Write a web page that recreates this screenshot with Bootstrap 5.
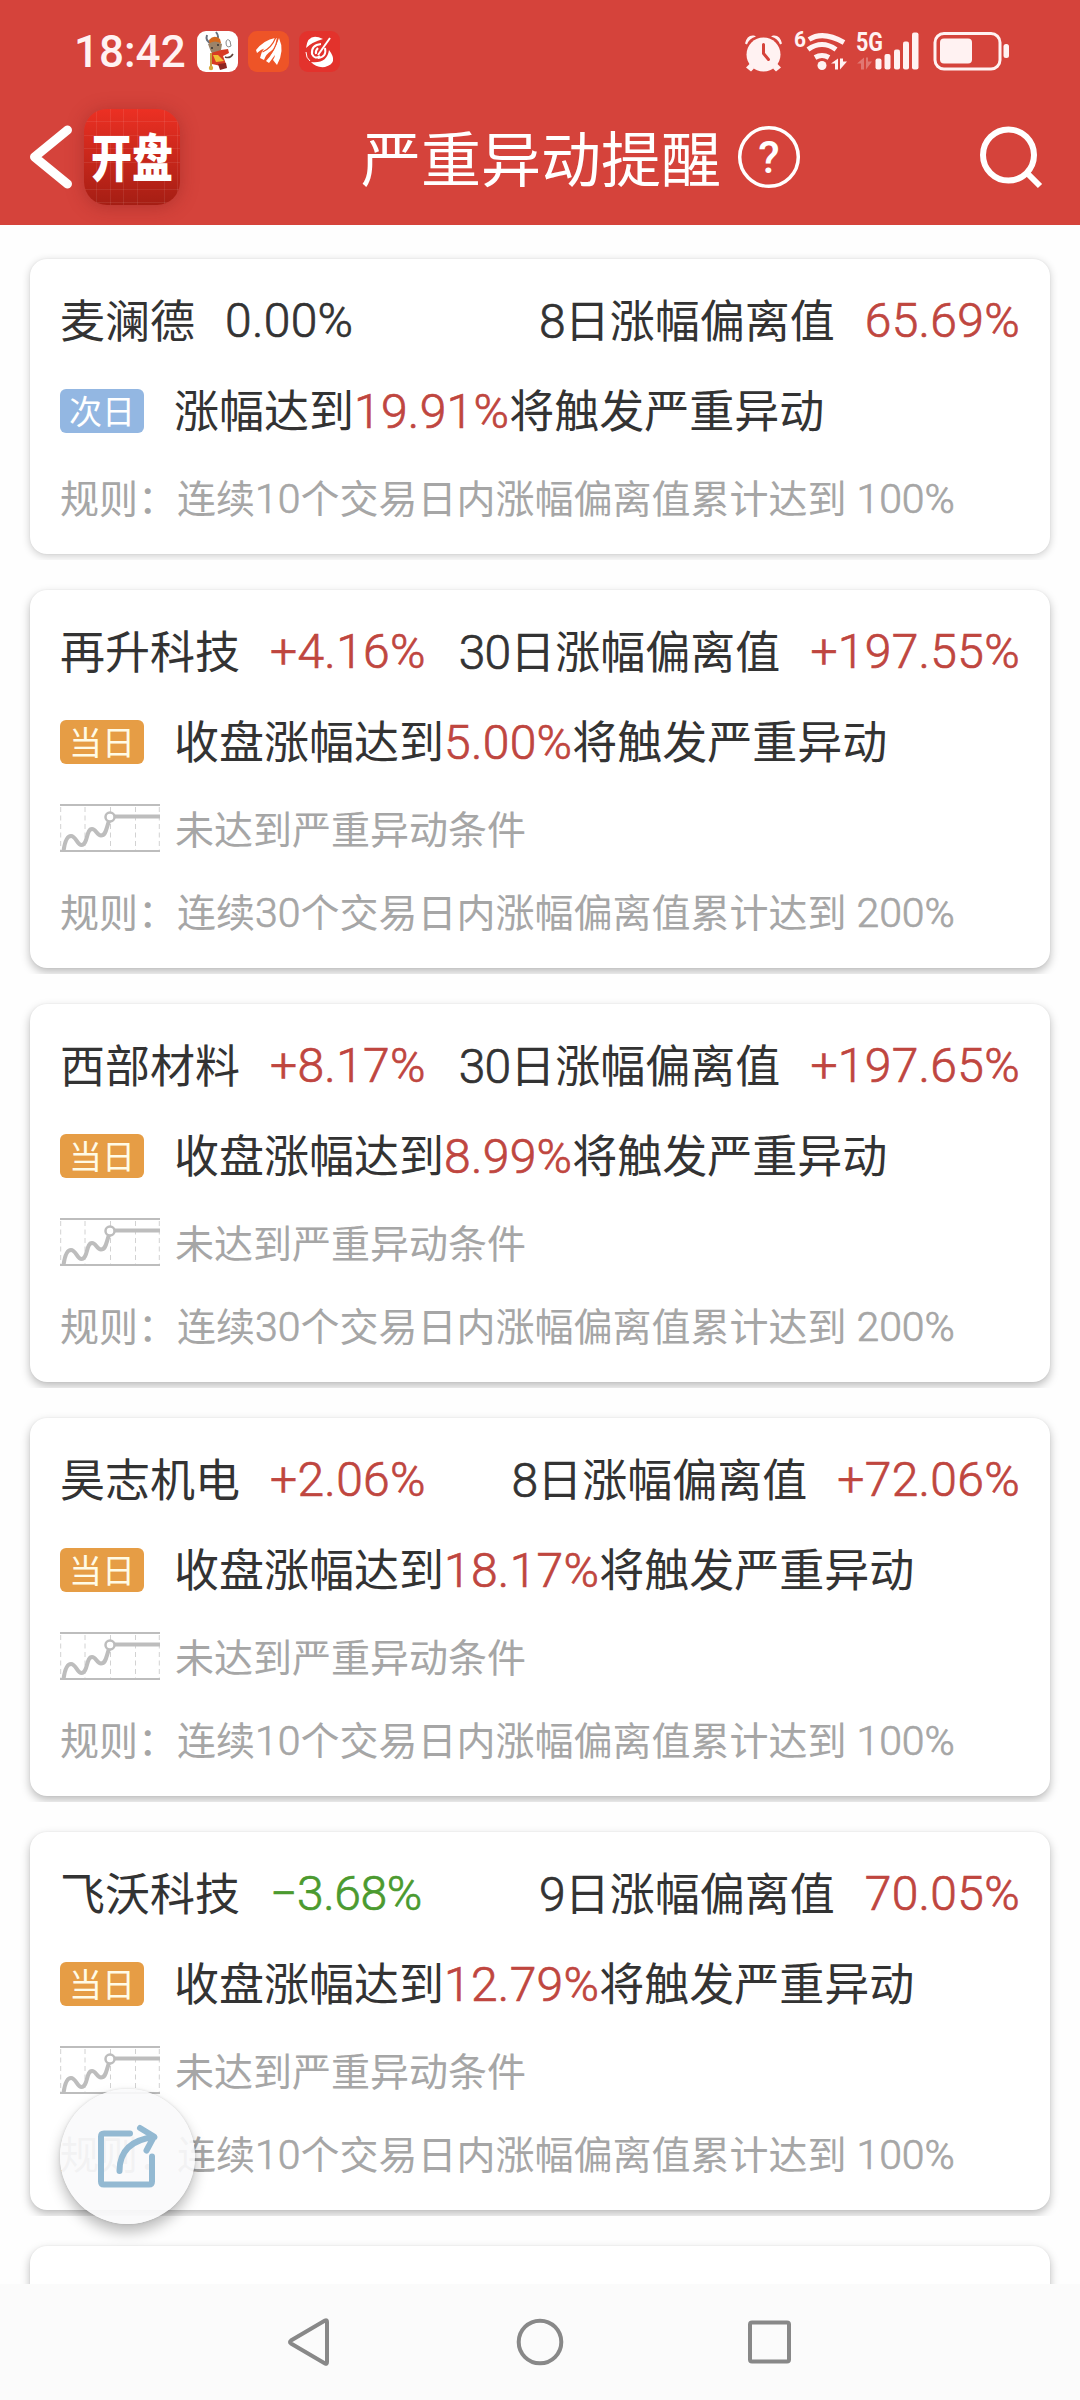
<!DOCTYPE html>
<html lang="zh-CN">
<head>
<meta charset="utf-8">
<title>严重异动提醒</title>
<link href="https://cdn.jsdelivr.net/npm/bootstrap@5.3.0/dist/css/bootstrap.min.css" rel="stylesheet">
<style>
  body { width: 1080px; height: 2400px; overflow: hidden; background: #fefefe; color: #333; font-family: Roboto, "Noto Sans CJK SC", sans-serif; }
  .phone { height: 2400px; position: relative; overflow: hidden; }
  .top-area { height: 225px; background: #d5433b; flex: none; }
  .status-row { height: 103px; padding: 0 71px 0 74px; }
  .clock { font-size: 44px; font-weight: 500; line-height: 1; color: #fff2f2; width: 123px; }
  .title-row { height: 108px; padding: 0 37px 0 28px; }
  .title-group { padding-left: 3px; }
  .page-title { font-size: 60px; line-height: 60px; color: #fff; font-family: "Noto Sans CJK SC", sans-serif; font-weight: 400; margin-top: -3px; }
  .brand { width: 96px; height: 96px; border-radius: 23px; color: #fff; font: 900 41px/1 "Noto Sans CJK SC", sans-serif;
    background: repeating-linear-gradient(90deg, transparent 0 12.5px, #ffffff14 12.5px 13.5px), repeating-linear-gradient(transparent 0 12.5px, #ffffff14 12.5px 13.5px), linear-gradient(#ec3023, #a51e14);
    box-shadow: 0 2px 18px #7a1a1a60; }
  .brand span { transform: scaleY(1.24); margin-top: -4px; }
  .feed { padding: 34px 30px 0; gap: 36px; }
  .alert-card { height: 378px; flex: none; background: #fff; border-radius: 17px; padding: 0 30px; box-shadow: 0 4px 10px #0004, 0 0 2px #0001; clip-path: inset(-6px -12px); }
  .alert-card.short { height: 295px; box-shadow: 0 2px 8px #0003, 0 0 2px #0001; }
  .headline { height: 122px; padding-top: 1px; font-size: 45px; line-height: 1; }
  .headline .stock { margin-top: -5px; }
  .verdict { height: 60px; font-size: 45px; line-height: 1; }
  .status-note { height: 58px; margin-top: 27px; font-size: 39px; line-height: 1; color: #a6a6a6; }
  .status-note .zh { margin-top: -1px; }
  .rule { height: 58px; margin-top: 26px; font-size: 39px; line-height: 1; color: #a6a6a6; }
  .short .rule { margin-top: 28px; }
  .zh { font-family: "Noto Sans CJK SC", sans-serif; font-weight: 400; white-space: nowrap; }
  .num { font-family: Roboto, sans-serif; font-size: 1.0667em; line-height: 1; font-weight: 300; letter-spacing: .3px; -webkit-text-stroke: .7px currentColor; }
  .ms-auto .num { letter-spacing: -.8px; }
  .rule .num { font-size: 1.05em; letter-spacing: 0; }
  .ms-30 { margin-left: 30px; }
  .up { color: #bf463f; }
  .down { color: #4b9a2f; letter-spacing: -.4px; }
  .day-tag { width: 84px; height: 44px; border-radius: 6px; margin-right: 30px; color: #fffbe6; background: #e69d45; font: 400 33px/1 "Noto Sans CJK SC", sans-serif; padding-bottom: 2px; }
  .day-tag.next { background: #93b7e2; color: #fff; }
  .trend-icon { margin-right: 15px; }
  .fab { position: absolute; left: 60px; top: 2089px; width: 135px; height: 135px; border-radius: 50%; background: #fafafbe8; box-shadow: 0 8px 14px #0004, 0 0 3px #0002; }
  .nav-keys { position: absolute; left: 0; right: 0; bottom: 0; height: 116px; background: #fbfbfb; padding: 0 286px; }
  svg { display: block; flex: none; }
</style>
<script src="https://cdn.jsdelivr.net/npm/bootstrap@5.3.0/dist/js/bootstrap.bundle.min.js"></script>
</head>
<body>
<svg width="0" height="0" class="position-absolute">
  <symbol id="trend" viewBox="0 0 100 48">
    <path d="M0 1h100M0 47h100" stroke="#bdbdbd" stroke-width="2" fill="none"/>
    <path d="M.7 3v43M25 3v43M50.5 3v43M75.5 3v43M99.3 3v43" stroke="#d2d2d2" stroke-width="1" stroke-dasharray="5 3.5" fill="none"/>
    <path d="M3.500 47C5 36 8 32 11 32C16 32 17 41 21.500 41C28 41 26 25 32 25C36 25 37 31.500 41 31.500C46 31.500 46 25 49 17" stroke="#bdbdbd" stroke-width="4" fill="none"/>
    <path d="M54 12.500h46" stroke="#bdbdbd" stroke-width="4"/>
    <circle cx="50" cy="13" r="4.500" fill="#fff" stroke="#bdbdbd" stroke-width="2.500"/>
  </symbol>
</svg>
<div class="phone d-flex flex-column">
  <header class="top-area">
    <div class="status-row d-flex align-items-center">
      <span class="clock">18:42</span>
      <svg width="143" height="41" viewBox="0 0 143 41">
        <rect width="41" height="41" rx="9" fill="#fff"/>
        <path d="M10 4q-2 6 4 8M19 1q4 5 0 9" stroke="#68707c" stroke-width="2" fill="none"/>
        <path d="M12 9q5-6 11-1l1 4-11 2z" fill="#d4691f"/><path d="M11 13q7-5 14 0l-1 6q-6 6-10 2z" fill="#9b8369"/>
        <path d="M14 22l10-3 7-1 1 4-6 3 3 8-5 2-9-2-2-6z" fill="#d83b22"/><path d="M16 24h5l6 6-8 1z" fill="#f0bd35"/>
        <path d="M21 33l8-1 1 5-7 2z" fill="#8c2520"/><path d="M14 22v15" stroke="#c99c43" stroke-width="2"/><circle cx="14" cy="37" r="2.200" fill="#d9aa3c"/>
        <path d="M28 26q5 2 8-3" stroke="#61443b" stroke-width="1.500" fill="none"/><path d="M29 11q1-4 4-1l1 5q-5 3-5-4" fill="#fff" stroke="#888"/><path d="M14 17h2M20 14h2" stroke="#333" stroke-width="1.500"/>
        <rect x="51" width="41" height="41" rx="9" fill="#ee5427"/>
        <path d="M59 19q8-10 19-12q-2 8-9 10q-5 1-9 5z" fill="#fff"/><path d="M63 27q3-14 17-20q0 9-6 13q-5 3-7 9z" fill="#fff"/><path d="M69 30q8-8 13-23q6 13-2 27l-4-5q2-3 2-5l-6 8z" fill="#fff"/>
        <path d="M80.500 7q-2 12-10 19M78.500 7q-4 10-13 14" stroke="#ee5427" stroke-width="1.200" fill="none"/>
        <rect x="102" width="41" height="41" rx="9" fill="#e3322c"/>
        <path d="M126 8q-15-7-17 9q6-6 17-9zM114 31q16 2 18-12q10 13-4 17q-9 1-14-5z" fill="#fff"/><path d="M133 7L121 24" stroke="#fff" stroke-width="2"/><path d="M124 13q-10 1-9 10q3 6 8 2M128 17q2 9-7 10M121 17q-3 3-2 6" stroke="#fff" stroke-width="2" fill="none"/><path d="M109 21q0 6 4 9" stroke="#fff" fill="none"/>
      </svg>
      <svg class="ms-auto" width="266" height="54" viewBox="743 24.500 266 54" fill="#fff2f2">
        <circle cx="763.500" cy="54" r="17"/><path d="M745 43q2-9 9-8l2 1q-7 2-9 8zM782 43q-2-9-9-8l-2 1q7 2 9 8zM750 63l4 5-3 3-5-4zM777 63l-4 5 3 3 5-4z"/>
        <path d="M763.500 44v9l5 6" stroke="#d5433b" stroke-width="3" fill="none" stroke-linecap="round"/>
        <text x="794" y="46" font-family="Roboto" font-size="22" font-weight="700" textLength="12" lengthAdjust="spacingAndGlyphs">6</text>
        <path d="M809 39q14-9 35 3M808 49q14-10 28 0M815 57q7-4 14 0" stroke="#fff2f2" stroke-width="5" fill="none"/><circle cx="822" cy="65" r="4.500"/>
        <path d="M838 58v11h-3v-6h-4zM840 58v11l7-8h-4v-3z"/>
        <text x="856" y="50.500" font-family="Roboto" font-size="25" font-weight="700" textLength="27" lengthAdjust="spacingAndGlyphs">5G</text>
        <path d="M864 57v12h-3v-6h-4zM866 57v12l6-8h-4v-4z" opacity=".3"/>
        <rect x="875.500" y="58" width="6" height="11" rx="2"/><rect x="884.500" y="53.500" width="6" height="15.500" rx="2"/><rect x="894" y="49" width="6" height="20" rx="2"/><rect x="903" y="41" width="6" height="28" rx="2"/><rect x="912" y="32" width="6.500" height="37" rx="2"/>
        <rect x="935" y="33" width="65" height="35.500" rx="9" fill="none" stroke="#fff2f2" stroke-width="3"/><rect x="940" y="38" width="32" height="25" rx="4"/><rect x="1003.500" y="43.500" width="5.500" height="14" rx="2.500"/>
      </svg>
    </div>
    <div class="title-row d-flex align-items-center">
      <svg width="56" height="72" viewBox="0 0 56 72"><path d="M39.500 9L6.500 36l33 27" fill="none" stroke="#fff" stroke-width="9" stroke-linecap="round" stroke-linejoin="round"/></svg>
      <div class="brand d-flex align-items-center justify-content-center"><span>开盘</span></div>
      <div class="title-group d-flex align-items-center mx-auto">
        <span class="page-title">严重异动提醒</span>
        <svg class="ms-3" width="64" height="64" viewBox="0 0 64 64"><circle cx="32" cy="32" r="29.300" fill="none" stroke="#fff" stroke-width="3.500"/><text x="32" y="48" text-anchor="middle" font-family="Roboto" font-size="44" font-weight="500" fill="#fff">?</text></svg>
      </div>
      <svg width="64" height="66" viewBox="0 0 64 66" fill="none" stroke="#fff"><circle cx="29.500" cy="31" r="25.500" stroke-width="6"/><path d="M47 48l14 14" stroke-width="6"/></svg>
    </div>
  </header>

  <main class="feed d-flex flex-column">
    <section class="alert-card short">
      <div class="headline d-flex align-items-center"><span class="zh stock">麦澜德</span><span class="num ms-30">0.00%</span><span class="zh ms-auto"><span class="num">8</span>日涨幅偏离值</span><span class="num up ms-30">65.69%</span></div>
      <div class="verdict d-flex align-items-center"><span class="day-tag next d-flex align-items-center justify-content-center">次日</span><span class="zh">涨幅达到<span class="num up">19.91%</span>将触发严重异动</span></div>
      <div class="rule d-flex align-items-center"><span class="zh">规则：连续<span class="num">10</span>个交易日内涨幅偏离值累计达到<span class="num"> 100%</span></span></div>
    </section>
    <section class="alert-card">
      <div class="headline d-flex align-items-center"><span class="zh stock">再升科技</span><span class="num up ms-30">+4.16%</span><span class="zh ms-auto"><span class="num">30</span>日涨幅偏离值</span><span class="num up ms-30">+197.55%</span></div>
      <div class="verdict d-flex align-items-center"><span class="day-tag d-flex align-items-center justify-content-center">当日</span><span class="zh">收盘涨幅达到<span class="num up">5.00%</span>将触发严重异动</span></div>
      <div class="status-note d-flex align-items-center"><svg class="trend-icon" width="100" height="48"><use href="#trend"/></svg><span class="zh">未达到严重异动条件</span></div>
      <div class="rule d-flex align-items-center"><span class="zh">规则：连续<span class="num">30</span>个交易日内涨幅偏离值累计达到<span class="num"> 200%</span></span></div>
    </section>
    <section class="alert-card">
      <div class="headline d-flex align-items-center"><span class="zh stock">西部材料</span><span class="num up ms-30">+8.17%</span><span class="zh ms-auto"><span class="num">30</span>日涨幅偏离值</span><span class="num up ms-30">+197.65%</span></div>
      <div class="verdict d-flex align-items-center"><span class="day-tag d-flex align-items-center justify-content-center">当日</span><span class="zh">收盘涨幅达到<span class="num up">8.99%</span>将触发严重异动</span></div>
      <div class="status-note d-flex align-items-center"><svg class="trend-icon" width="100" height="48"><use href="#trend"/></svg><span class="zh">未达到严重异动条件</span></div>
      <div class="rule d-flex align-items-center"><span class="zh">规则：连续<span class="num">30</span>个交易日内涨幅偏离值累计达到<span class="num"> 200%</span></span></div>
    </section>
    <section class="alert-card">
      <div class="headline d-flex align-items-center"><span class="zh stock">昊志机电</span><span class="num up ms-30">+2.06%</span><span class="zh ms-auto"><span class="num">8</span>日涨幅偏离值</span><span class="num up ms-30">+72.06%</span></div>
      <div class="verdict d-flex align-items-center"><span class="day-tag d-flex align-items-center justify-content-center">当日</span><span class="zh">收盘涨幅达到<span class="num up">18.17%</span>将触发严重异动</span></div>
      <div class="status-note d-flex align-items-center"><svg class="trend-icon" width="100" height="48"><use href="#trend"/></svg><span class="zh">未达到严重异动条件</span></div>
      <div class="rule d-flex align-items-center"><span class="zh">规则：连续<span class="num">10</span>个交易日内涨幅偏离值累计达到<span class="num"> 100%</span></span></div>
    </section>
    <section class="alert-card">
      <div class="headline d-flex align-items-center"><span class="zh stock">飞沃科技</span><span class="num down ms-30">−3.68%</span><span class="zh ms-auto"><span class="num">9</span>日涨幅偏离值</span><span class="num up ms-30">70.05%</span></div>
      <div class="verdict d-flex align-items-center"><span class="day-tag d-flex align-items-center justify-content-center">当日</span><span class="zh">收盘涨幅达到<span class="num up">12.79%</span>将触发严重异动</span></div>
      <div class="status-note d-flex align-items-center"><svg class="trend-icon" width="100" height="48"><use href="#trend"/></svg><span class="zh">未达到严重异动条件</span></div>
      <div class="rule d-flex align-items-center"><span class="zh">规则：连续<span class="num">10</span>个交易日内涨幅偏离值累计达到<span class="num"> 100%</span></span></div>
    </section>
    <section class="alert-card"></section>
  </main>

  <div class="fab d-flex align-items-center justify-content-center">
    <svg width="62" height="66" viewBox="97 2124 62 66" fill="none" stroke="#93b9d2" stroke-width="6" stroke-linecap="round" stroke-linejoin="round"><path d="M130 2133.500h-26q-3 0-3 3v45q0 3 3 3h45q3 0 3-3v-25M119.500 2171q0-30 35-34M140 2128l14 8.500-7.500 14"/></svg>
  </div>
  <nav class="nav-keys d-flex align-items-center justify-content-between">
    <svg width="46" height="50" viewBox="0 0 46 50"><path d="M39 3.500q2-1 2 1.500v40q0 2.500-2 1.500L5 26.500q-2-1.500 0-3z" fill="none" stroke="#888" stroke-width="4"/></svg>
    <svg width="50" height="50" viewBox="0 0 50 50"><circle cx="25" cy="25" r="21.300" fill="none" stroke="#888" stroke-width="4"/></svg>
    <svg width="46" height="50" viewBox="0 0 46 50"><rect x="2" y="5.500" width="39" height="39" rx="2" fill="none" stroke="#888" stroke-width="4"/></svg>
  </nav>
</div>
</body>
</html>
